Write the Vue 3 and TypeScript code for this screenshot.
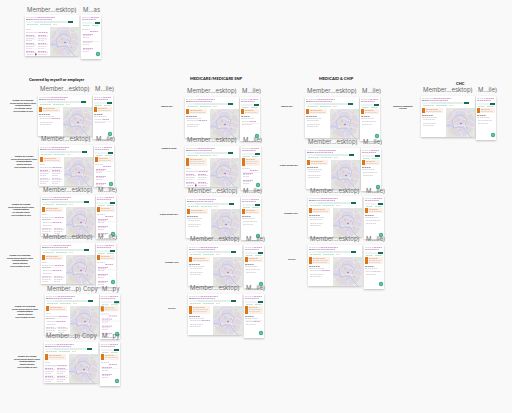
<script setup lang="ts">
type Body = 'few' | 'rows' | 'results'

interface Frame {
  x: number
  y: number
  gap: number
  height: number
  mobileHeight: number
  labelTop: number
  alert: number
  body: Body
  magenta: boolean
  pager?: boolean
  desktop: string
  mobile: string
}

interface Note {
  x: number
  y: number
  lines: string[]
}

interface Bar {
  x: number
  y: number
  w: number
  tone: string
}

const frame = (
  x: number, y: number, gap: number, mobileHeight: number, alert: number, body: Body,
  magenta: boolean, extra: Partial<Frame> = {},
): Frame => ({
  x, y, gap, mobileHeight, alert, body, magenta,
  height: 41,
  labelTop: y - 10,
  desktop: 'Member…esktop)',
  mobile: 'M…ile)',
  ...extra,
})

const copy = { desktop: 'Member…p) Copy', mobile: 'M…py' }

const frames: Frame[] = [
  frame(25, 15, 56, 44, 0, 'results', true, { mobile: 'M…as', pager: true, labelTop: 6 }),
  frame(38, 95, 55, 44, 5, 'few', true),
  frame(39, 145, 55, 42, 5, 'results', true),
  frame(41, 195, 55, 44, 5, 'rows', true, { labelTop: 186 }),
  frame(41, 243, 55, 44, 5, 'rows', true),
  frame(45, 294, 55, 45, 5, 'rows', true, { ...copy, labelTop: 285 }),
  frame(44, 342, 56, 44, 6, 'results', true, copy),
  frame(185, 97, 55, 44, 5, 'few', true),
  frame(185, 146, 56, 44, 8, 'results', true, { pager: true }),
  frame(186, 197, 55, 43, 5, 'few', false),
  frame(188, 245, 56, 43, 5, 'few', false),
  frame(188, 294, 56, 44, 8, 'few', true),
  frame(305, 97, 55, 44, 5, 'few', false),
  frame(306, 148, 55, 43, 5, 'few', false),
  frame(308, 196, 56, 43, 5, 'few', false, { labelTop: 187 }),
  frame(308, 245, 56, 44, 7, 'few', true),
  frame(421, 96, 55, 44, 5, 'few', false),
]

const titles = [
  { x: 29, y: 78, text: 'Covered by myself or employer' },
  { x: 190, y: 77, text: 'MEDICARE/MEDICARE SNP' },
  { x: 319, y: 77, text: 'MEDICAID & CHIP' },
  { x: 456, y: 82, text: 'CHC' },
]

const scenario = (id: string, result: string) => [
  `Member ID is ${id}`, 'Search queries doesn’t return', 'recommendations', result, 'Click Location on Skip',
]

const notes: Note[] = [
  { x: 23, y: 99, lines: scenario('unknown', 'No returned results') },
  { x: 24, y: 155, lines: scenario('known', 'Results returned') },
  { x: 21, y: 203, lines: scenario('known', 'No returned results') },
  { x: 20, y: 254, lines: scenario('unknown', 'Results returned') },
  { x: 25, y: 305, lines: scenario('unknown', 'Results returned') },
  { x: 27, y: 355, lines: scenario('known', 'Results returned') },
  { x: 167, y: 105, lines: ['Medical 2024'] },
  { x: 169, y: 147, lines: ['Medical & Ortho'] },
  { x: 169, y: 213, lines: ['Classic, Rocket 2024'] },
  { x: 172, y: 261, lines: ['Pharmacy 2024'] },
  { x: 172, y: 307, lines: ['Rx 2024'] },
  { x: 287, y: 105, lines: ['Medical 2024'] },
  { x: 289, y: 164, lines: ['Classic, Rocket 2024'] },
  { x: 291, y: 212, lines: ['Pharmacy 2024'] },
  { x: 292, y: 258, lines: ['Rx 2024'] },
  { x: 403, y: 105, lines: ['Medical & Community', 'Services'] },
]

function desktopBars(f: Frame): Bar[] {
  const top = f.alert ? 14 + f.alert : 14
  const bars: Bar[] = []
  if (f.body === 'few') {
    bars.push({ x: 1, y: top, w: 11, tone: 'dark' }, { x: 1, y: top + 2, w: 15, tone: 'grey' })
    bars.push({ x: 2, y: top + 4, w: 12, tone: 'grey' })
    if (f.magenta) bars.push({ x: 14, y: top + 4, w: 8, tone: 'pink' })
    bars.push({ x: 2, y: top + 8, w: 13, tone: 'grey' }, { x: 2, y: top + 10, w: 11, tone: 'grey' })
    return bars
  }
  bars.push({ x: 1, y: top, w: 5, tone: 'grey' })
  bars.push({ x: 1, y: top + 3, w: 13, tone: 'grey' }, { x: 14, y: top + 3, w: 9, tone: 'pink' })
  if (f.body === 'rows') {
    bars.push({ x: 1, y: top + 5, w: 9, tone: 'dark' }, { x: 2, y: top + 8, w: 10, tone: 'grey' })
    bars.push({ x: 12, y: top + 8, w: 9, tone: 'pink' }, { x: 2, y: top + 11, w: 9, tone: 'grey' })
  }
  for (let y = top + (f.body === 'rows' ? 14 : 6); y < 37; y += 8) {
    for (const x of [1, 13]) {
      bars.push({ x, y, w: 8, tone: 'pink' }, { x, y: y + 1, w: 10, tone: 'soft' })
      bars.push({ x, y: y + 3, w: 9, tone: 'grey' })
      if (y < 35) bars.push({ x, y: y + 5, w: 6, tone: 'grey' })
    }
  }
  return bars
}

function mobileBars(f: Frame): Bar[] {
  const top = f.alert ? 14 + f.alert : 14
  const bars: Bar[] = []
  if (f.body === 'few') {
    bars.push({ x: 1, y: top, w: 9, tone: 'dark' }, { x: 1, y: top + 2, w: 13, tone: 'grey' })
    bars.push({ x: 2, y: top + 5, w: 8, tone: 'grey' })
    bars.push({ x: 10, y: top + 5, w: 6, tone: f.magenta ? 'pink' : 'grey' })
    bars.push({ x: 2, y: top + 8, w: 10, tone: 'grey' })
    return bars
  }
  bars.push({ x: 1, y: top, w: 8, tone: 'grey' }, { x: 9, y: top + 2, w: 8, tone: 'pink' })
  for (let y = top + 5; y < 39; y += 7) {
    bars.push({ x: 2, y, w: 10, tone: 'pink' }, { x: 2, y: y + 1, w: 8, tone: 'soft' })
    bars.push({ x: 2, y: y + 3, w: 6, tone: 'grey' })
  }
  return bars
}

const place = (x: number, y: number) => ({ left: `${x}px`, top: `${y}px` })
const box = (x: number, y: number, w: number, h: number) => ({
  ...place(x, y), width: `${w}px`, height: `${h}px`,
})
</script>

<template>
  <main class="canvas">
    <svg class="defs" aria-hidden="true">
      <defs>
        <symbol id="city-map" viewBox="0 0 29 29">
          <rect width="29" height="29" fill="#e6e6e5" />
          <path d="M0 5 6 3 9 9 0 14zM21 0h8v5l-5 2zM1 22l7-2 2 6-7 3z" fill="#dde5dc" />
          <circle cx="14.500" cy="14.500" r="14" fill="#dcd5e4" opacity=".85" />
          <path d="M0 14 5 11 10 3 17 2 22 6 29 4M5 0 8 8 8 17 14 22 16 29M0 23 8 18 17 17 29 20M12 8 19 12 24 12 29 15M20 0 21 9 18 17 22 29" fill="none" stroke="#f3eff1" stroke-width=".6" />
          <path d="M2 9 7 7 10 10 12 17 8 22 7 29M17 5 20 8 25 8M23 10 21 17 24 24M3 25 9 20" fill="none" stroke="#edddb8" stroke-width=".8" />
          <path d="M0 18 4 17 8 20 13 19 18 20 21 25 25 29M8 20 6 13 10 8 16 7 21 11 19 17" fill="none" stroke="#bac7ea" stroke-width=".9" />
          <circle cx="15" cy="15.500" r=".7" fill="#a44bab" />
          <path d="M11 12h2M17 13h2M13 22h2M20 20h2M8 14h1" stroke="#c9b3d3" stroke-width=".7" />
        </symbol>
      </defs>
    </svg>

    <h2 v-for="t in titles" :key="t.text" class="title" :style="place(t.x, t.y)">{{ t.text }}</h2>

    <div v-for="(n, i) in notes" :key="'n' + i" class="note" :style="place(n.x, n.y)">
      <p v-for="(line, j) in n.lines" :key="j" :class="{ wrapped: line === 'recommendations' || line === 'Services' }">{{ line }}</p>
    </div>

    <section v-for="(f, i) in frames" :key="'f' + i">
      <svg class="artboard" :style="box(f.x, f.y, 54, f.height)" viewBox="0 0 54 41" aria-hidden="true">
        <rect width="54" height="41" fill="#fff" />
        <path class="text grey" d="M1 2.500H13" />
        <path class="text pink" d="M13 2.500H30M6 4.500H27" />
        <path class="text dark" d="M1 4.500H6" />
        <rect x="1" y="6" width="42" height="2" fill="#edf4f2" />
        <path class="text mint" d="M10 7H42" />
        <rect x="43" y="6" width="5" height="2" fill="#136d54" />
        <path class="text green" d="M2 9.500H13M15 9.500H26" />
        <path class="text peach" d="M28 9.500H32" />
        <template v-if="f.alert">
          <rect x="1" y="12" width="21" :height="f.alert" fill="#fdf0e7" />
          <rect x="1" y="12" width="3" :height="f.alert" fill="#dc7616" />
          <path class="text orange" d="M5 13.500H17" />
          <path class="text grey" d="M5 15.500H20" />
          <path v-if="f.alert > 6" class="text grey" d="M5 17.500H19" />
        </template>
        <path
          v-for="(b, j) in desktopBars(f)" :key="j" class="text" :class="b.tone"
          :d="`M${b.x} ${b.y + 0.5}h${b.w}`"
        />
        <path v-if="f.body !== 'few'" d="M1 24.500H24M1 33.500H24" stroke="#ececec" stroke-width=".5" />
        <template v-if="f.pager">
          <rect x="0" y="38" width="25" height="3" fill="#fff" />
          <path class="text grey" d="M2 39.500H8M13 39.500H22" />
          <rect x="10" y="38.500" width="1.500" height="1.800" fill="#a1298f" />
        </template>
        <use href="#city-map" x="25" y="12" width="29" height="29" />
      </svg>

      <svg class="artboard" :style="box(f.x + f.gap, f.y, 20, f.mobileHeight)" viewBox="0 0 20 44" preserveAspectRatio="xMidYMin slice" aria-hidden="true">
        <rect width="20" height="46" fill="#fff" />
        <path class="text grey" d="M1 2.500H10" />
        <path class="text pink" d="M10 2.500H18M1 4.500H15" />
        <rect x="1" y="7" width="14" height="2" fill="#edf4f2" />
        <rect x="14" y="7" width="5" height="2" fill="#136d54" />
        <path class="text green" d="M2 10.500H9M11 10.500H18" />
        <template v-if="f.alert">
          <rect x="1" y="12" width="18" :height="f.alert" fill="#fdf0e7" />
          <rect x="1" y="12" width="3" :height="f.alert" fill="#dc7616" />
          <path class="text orange" d="M5 13.500H14" />
          <path class="text grey" d="M5 15.500H17" />
          <path v-if="f.alert > 6" class="text grey" d="M5 17.500H16" />
        </template>
        <path
          v-for="(b, j) in mobileBars(f)" :key="j" class="text" :class="b.tone"
          :d="`M${b.x} ${b.y + 0.5}h${b.w}`"
        />
        <path v-if="f.body !== 'few' || f.magenta" d="M1 26.500H19" stroke="#e6e6e6" stroke-width=".5" />
        <circle cx="17" cy="39" r="2.200" fill="#43ae8d" />
        <path d="M16 39h2" stroke="#b8e3d6" stroke-width=".7" />
      </svg>

      <span class="label" :style="place(f.x + 2, f.labelTop)">{{ f.desktop }}</span>
      <span class="label" :style="place(f.x + f.gap + 2, f.labelTop)">{{ f.mobile }}</span>
    </section>
  </main>
</template>

<style>
body {
  margin: 0;
  background: #f9f9f9;
}
</style>

<style scoped>
.canvas {
  position: relative;
  min-height: 100vh;
  overflow: hidden;
  background: #f9f9f9;
  font-family: Inter, "Liberation Sans", sans-serif;
}

.defs {
  position: absolute;
  width: 0;
  height: 0;
}

.title {
  position: absolute;
  margin: 0;
  color: #222;
  font-family: Lato, sans-serif;
  font-size: 4px;
  font-weight: 900;
  line-height: 4px;
  white-space: nowrap;
}

.note {
  position: absolute;
  display: flex;
  flex-direction: column;
  gap: 1px;
  transform: translateX(-50%);
  color: #111;
  font-family: Lato, sans-serif;
  font-size: 2px;
  font-weight: 700;
  line-height: 2px;
  text-align: center;
  white-space: nowrap;
}

.note p {
  margin: 0;
}

.note .wrapped {
  margin-top: -1px;
}

.artboard {
  position: absolute;
  display: block;
  box-shadow: 0 1px 2px rgba(0, 0, 0, 0.24);
}

.label {
  position: absolute;
  z-index: 1;
  color: #6c6c6c;
  font-size: 6px;
  line-height: 8px;
  white-space: nowrap;
}

.text {
  fill: none;
  stroke-width: 0.8;
  stroke-dasharray: 2.2 0.4 1.4 0.3;
}

.grey {
  stroke: #d3d0d5;
}

.dark {
  stroke: #8b878e;
}

.pink {
  stroke: #cb94cb;
}

.soft {
  stroke: #e2c8e2;
}

.mint {
  stroke: #c9e4dc;
}

.green {
  stroke: #a3d9c8;
}

.peach {
  stroke: #f5ceb3;
}

.orange {
  stroke: #eeb082;
}
</style>
